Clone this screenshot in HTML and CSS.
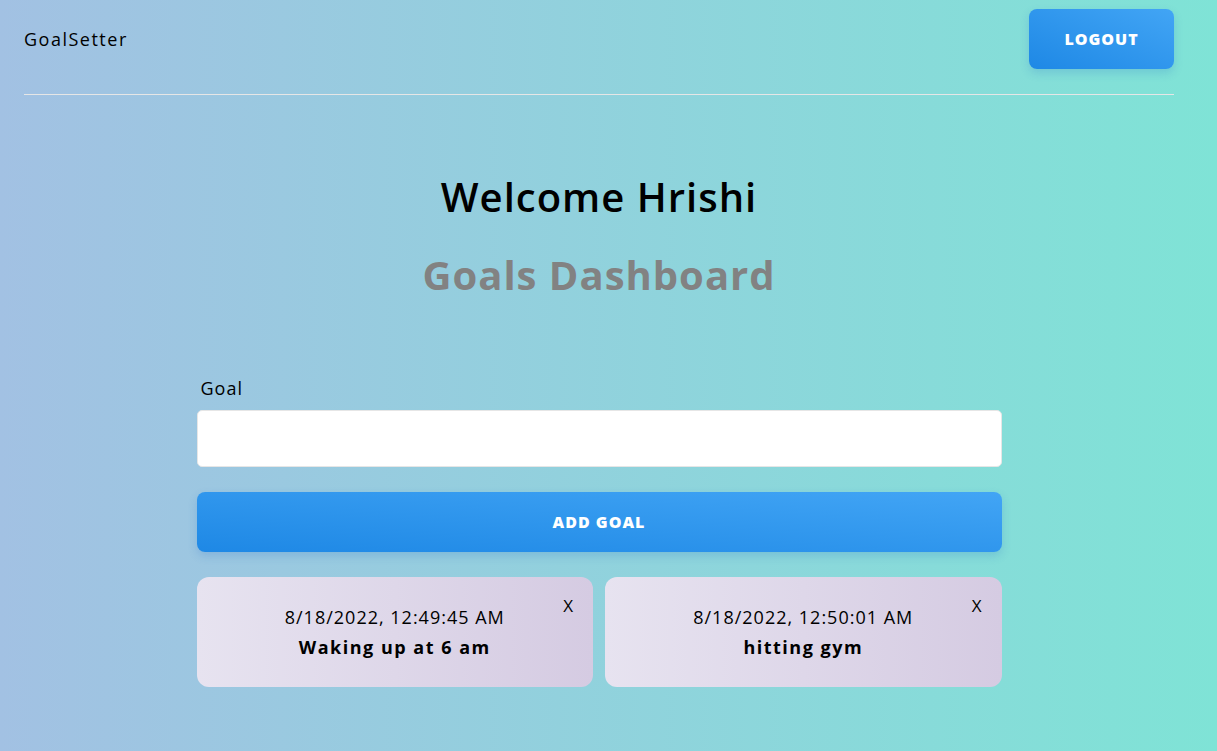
FILE: index.html
```html
<!DOCTYPE html>
<html lang="en">
<head>
<meta charset="utf-8">
<title>GoalSetter</title>
<link rel="stylesheet" href="styles.css">
</head>
<body>
<div class="container">
  <header class="header">
    <div class="logo">GoalSetter</div>
    <button class="btn btn-logout">LOGOUT</button>
  </header>
  <section class="heading">
    <h1>Welcome Hrishi</h1>
    <p>Goals Dashboard</p>
  </section>
  <section class="form">
    <div class="form-group">
      <label for="text">Goal</label>
      <input type="text" id="text" name="text">
    </div>
    <button class="btn btn-block">ADD GOAL</button>
  </section>
  <section class="content">
    <div class="goals">
      <div class="goal">
        <div class="date">8/18/2022, 12:49:45 AM</div>
        <h2>Waking up at 6 am</h2>
        <button class="close">X</button>
      </div>
      <div class="goal">
        <div class="date">8/18/2022, 12:50:01 AM</div>
        <h2>hitting gym</h2>
        <button class="close">X</button>
      </div>
    </div>
  </section>
</div>
</body>
</html>
```
FILE: styles.css
```css
* { box-sizing: border-box; margin: 0; padding: 0; }
html, body { height: 100%; }
body {
  font-family: "Open Sans", "DejaVu Sans", sans-serif;
  background: linear-gradient(to right, #a2c1e3, #7fe3d6);
  color: #000;
  min-height: 751px;
}
.container {
  width: 1150px;
  margin-left: 24px;
}
.header {
  display: flex;
  justify-content: space-between;
  align-items: center;
  padding: 9px 0 25px;
  border-bottom: 1px solid #e6e6e6;
  margin-bottom: 79px;
}
.logo { font-size: 18px; letter-spacing: 1.5px; }
.btn {
  border: none;
  border-radius: 8px;
  color: #fff;
  font-family: inherit;
  font-weight: 800;
  font-size: 16px;
  letter-spacing: 1px;
  background: linear-gradient(to top right, #1e88e5, #42a5f5);
  box-shadow: 0 4px 10px rgba(30, 100, 200, 0.2);
  cursor: pointer;
}
.btn-logout { width: 145px; height: 60px; }
.heading { text-align: center; margin-bottom: 78px; }
.heading h1 { font-size: 40px; font-weight: 600; line-height: 46px; margin-bottom: 32px; letter-spacing: 1px; }
.heading p { font-size: 40px; font-weight: 700; color: #828282; line-height: 46px; letter-spacing: 1px; }
.form { width: 805px; margin: 0 auto; }
.form-group { margin-bottom: 25px; }
.form-group label { display: block; font-size: 18px; padding-left: 4px; line-height: 24px; margin-bottom: 10px; letter-spacing: 1px; }
.form-group input {
  display: block; width: 100%; height: 57px;
  border: 1px solid #e6e6e6; border-radius: 5px; background: #fff;
}
.btn-block { display: block; width: 100%; height: 60px; }
.content { width: 805px; margin: 25px auto 0; }
.goals { display: grid; grid-template-columns: 1fr 1fr; gap: 12px; }
.goal {
  position: relative;
  height: 110px;
  border-radius: 12px;
  background: linear-gradient(to right, #e7e3f0, #d5cbe2);
  text-align: center;
  padding-top: 27px;
}
.date { font-size: 18px; line-height: 26px; letter-spacing: 1px; }
.goal h2 { font-size: 18px; font-weight: 700; line-height: 34px; letter-spacing: 1.5px; }
.close {
  position: absolute; top: 17px; right: 20px;
  border: none; background: none; font-family: inherit; font-size: 17px; cursor: pointer; color: #000;
}
```
